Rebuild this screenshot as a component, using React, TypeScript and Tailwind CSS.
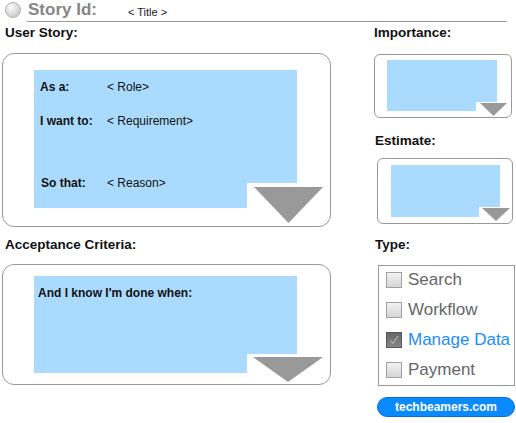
import type { ReactNode } from "react";

type Notch = { left: number; top: number; w: number; h: number };
type Tri = { left: number; top: number; w: number; h: number };

function Triangle({ tri }: { tri: Tri }) {
  return (
    <svg
      className="absolute"
      style={{ left: tri.left, top: tri.top }}
      width={tri.w}
      height={tri.h}
      viewBox={`0 0 ${tri.w} ${tri.h}`}
    >
      <polygon points={`0,0 ${tri.w},0 ${tri.w / 2},${tri.h}`} fill="#999999" />
    </svg>
  );
}

function NoteArea({
  width,
  height,
  notch,
  tri,
  children,
}: {
  width: number;
  height: number;
  notch: Notch;
  tri: Tri;
  children?: ReactNode;
}) {
  return (
    <div className="relative bg-[#aadbff]" style={{ width, height }}>
      {children}
      <div
        className="absolute bg-white"
        style={{ left: notch.left, top: notch.top, width: notch.w, height: notch.h }}
      />
      <Triangle tri={tri} />
    </div>
  );
}

function Label({ children, className = "" }: { children: ReactNode; className?: string }) {
  return <div className={`text-[13.5px] font-bold leading-[14px] text-[#111] ${className}`}>{children}</div>;
}

function CheckRow({ label, checked = false }: { label: string; checked?: boolean }) {
  return (
    <div className="flex h-[20px] items-center">
      {checked ? (
        <div className="flex h-[16px] w-[16px] items-center justify-center border border-[#555] bg-gradient-to-b from-[#666] to-[#888]">
          <svg width="12" height="12" viewBox="0 0 12 12">
            <path d="M2.5 6.5 L5 9.5 L10 2" fill="none" stroke="#c8c8c8" strokeWidth="0.9" />
          </svg>
        </div>
      ) : (
        <div className="h-[16px] w-[16px] border border-[#a0a0a0] bg-gradient-to-b from-[#f2f2f2] to-[#d6d6d6]" />
      )}
      <span className={`ml-[6px] text-[17px] leading-[20px] ${checked ? "text-[#1a8cff]" : "text-[#666]"}`}>
        {label}
      </span>
    </div>
  );
}

export default function App() {
  return (
    <div className="h-[423px] w-[516px] overflow-hidden bg-white font-['Liberation_Sans',Arial,sans-serif] text-[#111]">
      {/* header */}
      <div className="flex h-[21px] items-start pl-[5px]">
        <div className="mt-[1.5px] h-[16px] w-[16px] rounded-full border border-[#b0b0b0] bg-[radial-gradient(circle_at_35%_30%,#fafafa,#d0d0d0_70%,#bdbdbd)]" />
        <span className="ml-[7px] text-[17px] font-bold leading-[20px] text-[#858585]">Story Id:</span>
        <span className="ml-[31px] mt-[6px] text-[11px] leading-[12px] text-[#222]">&lt; Title &gt;</span>
      </div>
      <div className="ml-[27px] h-px w-[480px] bg-[#999]" />

      <div className="flex">
        {/* left column */}
        <div className="w-[332px] pl-[2px]">
          <Label className="mt-[4px] ml-[3px]">User Story:</Label>
          <div className="mt-[13px] h-[174px] w-[329px] rounded-[12px] border border-[#999] pl-[31px] pt-[16px]">
            <NoteArea
              width={263}
              height={138}
              notch={{ left: 213, top: 113, w: 50, h: 25 }}
              tri={{ left: 220, top: 117, w: 69, h: 36 }}
            >
              <div className="grid grid-cols-[67px_1fr] pl-[6px] pt-[10px] text-[12px] leading-[14px]">
                <span className="font-bold">As a:</span>
                <span>&lt; Role&gt;</span>
                <span className="mt-[20px] font-bold">I want to:</span>
                <span className="mt-[20px]">&lt; Requirement&gt;</span>
                <span className="mt-[48px] pl-px font-bold">So that:</span>
                <span className="mt-[48px]">&lt; Reason&gt;</span>
              </div>
            </NoteArea>
          </div>

          <Label className="mt-[11px] ml-[3px]">Acceptance Criteria:</Label>
          <div className="mt-[12px] h-[121px] w-[329px] rounded-[12px] border border-[#999] pl-[31px] pt-[11px]">
            <NoteArea
              width={263}
              height={97}
              notch={{ left: 213, top: 78, w: 50, h: 19 }}
              tri={{ left: 219, top: 81, w: 70, h: 25 }}
            >
              <div className="pl-[4px] pt-[10px] text-[12px] font-bold leading-[14px]">And I know I'm done when:</div>
            </NoteArea>
          </div>
        </div>

        {/* right column */}
        <div className="ml-[42px] flex flex-col items-start">
          <Label className="mt-[4px]">Importance:</Label>
          <div className="mt-[14px] h-[64px] w-[138px] rounded-[6px] border border-[#999] pl-[12px] pt-[5px]">
            <NoteArea
              width={110}
              height={51}
              notch={{ left: 89, top: 42, w: 21, h: 9 }}
              tri={{ left: 93, top: 43, w: 27, h: 13 }}
            />
          </div>

          <Label className="mt-[16px] ml-px">Estimate:</Label>
          <div className="ml-[3px] mt-[10px] h-[66px] w-[136px] rounded-[6px] border border-[#999] pl-[13px] pt-[6px]">
            <NoteArea
              width={109}
              height={52}
              notch={{ left: 88, top: 42, w: 21, h: 10 }}
              tri={{ left: 91, top: 43, w: 28, h: 13 }}
            />
          </div>

          <Label className="mt-[14px] ml-px">Type:</Label>
          <div className="ml-[4px] mt-[13px] flex h-[121px] w-[137px] flex-col gap-[10px] border border-[#999] pl-[7px] pt-[4px]">
            <CheckRow label="Search" />
            <CheckRow label="Workflow" />
            <CheckRow label="Manage Data" checked />
            <CheckRow label="Payment" />
          </div>

          <div className="ml-[3px] mt-[11px] flex h-[20px] w-[138px] items-center justify-center rounded-full border border-[#0b6fd0] bg-[#0a8aff] text-[12px] font-bold text-white">
            techbeamers.com
          </div>
        </div>
      </div>
    </div>
  );
}
